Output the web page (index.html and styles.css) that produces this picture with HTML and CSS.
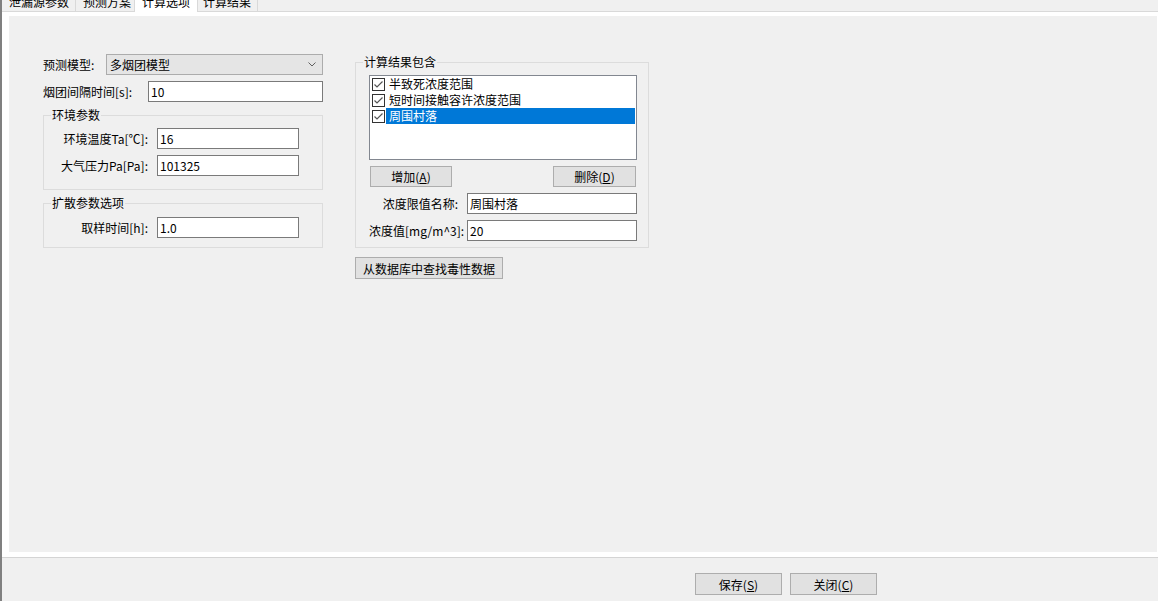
FILE: index.html
```html
<!DOCTYPE html>
<html lang="zh-CN">
<head>
    <meta charset="UTF-8">
    <meta name="viewport" content="width=device-width, initial-scale=1.0">
    <title>计算选项</title>
    <link rel="stylesheet" href="styles.css">
</head>
<body>
<div class="window">
    <!-- Tab strip -->
    <div class="tabs">
        <div class="tab">泄漏源参数</div>
        <div class="tab">预测方案</div>
        <div class="tab active">计算选项</div>
        <div class="tab">计算结果</div>
    </div>

    <div class="tab-page">
        <div class="panel">
            <!-- Left column: model + environment -->
            <div class="col-left">
                <div class="row">
                    <label class="lbl lbl-model">预测模型:</label>
                    <div class="combo">
                        <span>多烟团模型</span>
                        <svg width="8" height="5" viewBox="0 0 8 5"><polyline points="0.5,0.5 4,4 7.5,0.5" fill="none" stroke="#606060" stroke-width="1"/></svg>
                    </div>
                </div>
                <div class="row">
                    <label class="lbl lbl-interval">烟团间隔时间[s]:</label>
                    <input class="txt txt-fill" type="text" value="10">
                </div>

                <fieldset class="grp grp-env">
                    <legend>环境参数</legend>
                    <div class="row">
                        <label class="lbl lbl-grp">环境温度Ta[℃]:</label>
                        <input class="txt txt-grp" type="text" value="16">
                    </div>
                    <div class="row">
                        <label class="lbl lbl-grp">大气压力Pa[Pa]:</label>
                        <input class="txt txt-grp" type="text" value="101325">
                    </div>
                </fieldset>

                <fieldset class="grp grp-sample">
                    <legend>扩散参数选项</legend>
                    <div class="row">
                        <label class="lbl lbl-grp">取样时间[h]:</label>
                        <input class="txt txt-grp" type="text" value="1.0">
                    </div>
                </fieldset>
            </div>

            <!-- Right column: result items -->
            <div class="col-right">
                <fieldset class="grp grp-result">
                    <legend>计算结果包含</legend>
                    <div class="listbox">
                        <div class="item">
                            <svg class="chk" width="13" height="13" viewBox="0 0 13 13"><rect x="0.5" y="0.5" width="12" height="12" fill="#fff" stroke="#333"/><polyline points="2.5,6.5 5,9 10.5,3.5" fill="none" stroke="#555" stroke-width="1.2"/></svg>
                            <span class="item-text">半致死浓度范围</span>
                        </div>
                        <div class="item">
                            <svg class="chk" width="13" height="13" viewBox="0 0 13 13"><rect x="0.5" y="0.5" width="12" height="12" fill="#fff" stroke="#333"/><polyline points="2.5,6.5 5,9 10.5,3.5" fill="none" stroke="#555" stroke-width="1.2"/></svg>
                            <span class="item-text">短时间接触容许浓度范围</span>
                        </div>
                        <div class="item">
                            <svg class="chk" width="13" height="13" viewBox="0 0 13 13"><rect x="0.5" y="0.5" width="12" height="12" fill="#fff" stroke="#333"/><polyline points="2.5,6.5 5,9 10.5,3.5" fill="none" stroke="#555" stroke-width="1.2"/></svg>
                            <span class="item-text sel">周围村落</span>
                        </div>
                    </div>
                    <div class="btn-row">
                        <button class="btn btn-small">增加(<u>A</u>)</button>
                        <button class="btn btn-small">删除(<u>D</u>)</button>
                    </div>
                    <div class="row">
                        <label class="lbl lbl-right">浓度限值名称:</label>
                        <input class="txt txt-right" type="text" value="周围村落">
                    </div>
                    <div class="row">
                        <label class="lbl lbl-right">浓度值[mg/m^3]:</label>
                        <input class="txt txt-right" type="text" value="20">
                    </div>
                </fieldset>
                <button class="btn btn-db">从数据库中查找毒性数据</button>
            </div>
        </div>
    </div>

    <!-- Dialog buttons -->
    <div class="footer">
        <button class="btn btn-dlg">保存(<u>S</u>)</button>
        <button class="btn btn-dlg">关闭(<u>C</u>)</button>
    </div>
</div>
</body>
</html>
```

FILE: styles.css
```css
* {
    box-sizing: border-box;
}

body {
    margin: 0;
    background: #f0f0f0;
    font-family: "Noto Sans CJK SC", "Noto Sans", sans-serif;
    font-size: 12px;
    color: #000;
}

.window {
    width: 1158px;
    height: 601px;
    border-left: 2px solid #808080;
    display: flex;
    flex-direction: column;
    overflow: hidden;
}

/* tabs (top part scrolled out of view, as in the dialog) */
.tabs {
    display: flex;
    height: 12px;
    border-bottom: 1px solid #d9d9d9;
    flex-shrink: 0;
}

.tab {
    height: 11px;
    padding: 0 6px 0 7px;
    border-right: 1px solid #d9d9d9;
    line-height: 12px;
    overflow: hidden;
    white-space: nowrap;
    background: #f0f0f0;
}

.tab::before {
    content: "";
    display: block;
    margin-top: -4px;
}

.tab.active {
    height: 12px;
    background: #fff;
    border-left: 1px solid #d9d9d9;
    margin: 0 -2px 0 -4px;
    padding: 0 7px;
    position: relative;
    z-index: 1;
}

.tab-page {
    flex: 1;
    background: #fff;
    padding: 4px 1px 5px 7px;
    border-bottom: 1px solid #d4d4d4;
    display: flex;
    flex-direction: column;
}

.panel {
    flex: 1;
    background: #f0f0f0;
    padding: 38px 0 0 34px;
    display: flex;
    align-items: flex-start;
    gap: 32px;
}

/* columns */
.col-left {
    width: 280px;
    display: flex;
    flex-direction: column;
    gap: 6px;
}

.col-right {
    width: 294px;
    margin-top: 1px;
    display: flex;
    flex-direction: column;
    align-items: flex-start;
    gap: 9px;
}

.row {
    display: flex;
    align-items: center;
    height: 21px;
}

.lbl {
    white-space: nowrap;
    flex-shrink: 0;
}

.lbl-model {
    width: 63px;
}

.lbl-interval {
    width: 105px;
}

.lbl-grp {
    width: 90px;
    margin-right: 9px;
    text-align: right;
}

.lbl-right {
    width: 89px;
    margin-right: 9px;
    text-align: right;
}

/* combo + text boxes */
.combo {
    flex: 1;
    height: 21px;
    background: #e5e5e5;
    border: 1px solid #acacac;
    padding: 0 6px 0 3px;
    display: flex;
    align-items: center;
    justify-content: space-between;
    line-height: 19px;
}

.txt {
    height: 21px;
    border: 1px solid #7a7a7a;
    background: #fff;
    font: inherit;
    line-height: 19px;
    padding: 0 2px;
    margin: 0;
    outline: none;
    color: #000;
}

.txt-fill {
    flex: 1;
    min-width: 0;
}

.txt-grp {
    width: 142px;
}

.txt-right {
    width: 170px;
}

/* group boxes */
.grp {
    margin: 0;
    border: 1px solid #dcdcdc;
    display: flex;
    flex-direction: column;
    gap: 6px;
    min-width: 0;
}

.grp legend {
    padding: 0 1px;
    line-height: 14px;
}

.grp-env {
    padding: 6px 0 13px 14px;
}

.grp-sample {
    padding: 7px 0 9px 14px;
}

.grp-env legend,
.grp-sample legend {
    margin-left: -7px;
}

.grp-result {
    width: 294px;
    padding: 6px 11px 6px 13px;
}

.grp-result legend {
    margin-left: -6px;
}

/* list with checkboxes */
.listbox {
    height: 85px;
    border: 1px solid #828790;
    background: #fff;
}

.item {
    display: flex;
    align-items: center;
    height: 16px;
    padding-left: 2px;
}

.chk {
    flex-shrink: 0;
    margin-right: 1px;
}

.item-text {
    flex: 1;
    height: 16px;
    line-height: 16px;
    padding-left: 3px;
    margin-right: 1px;
}

.item-text.sel {
    background: #0078d7;
    color: #fff;
}

/* buttons */
.btn-row {
    display: flex;
    justify-content: space-between;
    padding: 0 1px;
}

.btn {
    background: #e1e1e1;
    border: 1px solid #adadad;
    font: inherit;
    color: #000;
    padding: 0;
    margin: 0;
    line-height: 19px;
}

.btn-small {
    width: 82px;
    height: 21px;
}

.btn-small + .btn-small {
    width: 83px;
}

.btn-db {
    width: 148px;
    height: 22px;
}

.footer {
    height: 43px;
    flex-shrink: 0;
    display: flex;
    gap: 8px;
    padding: 15px 0 0 693px;
}

.btn-dlg {
    width: 87px;
    height: 22px;
}
```
